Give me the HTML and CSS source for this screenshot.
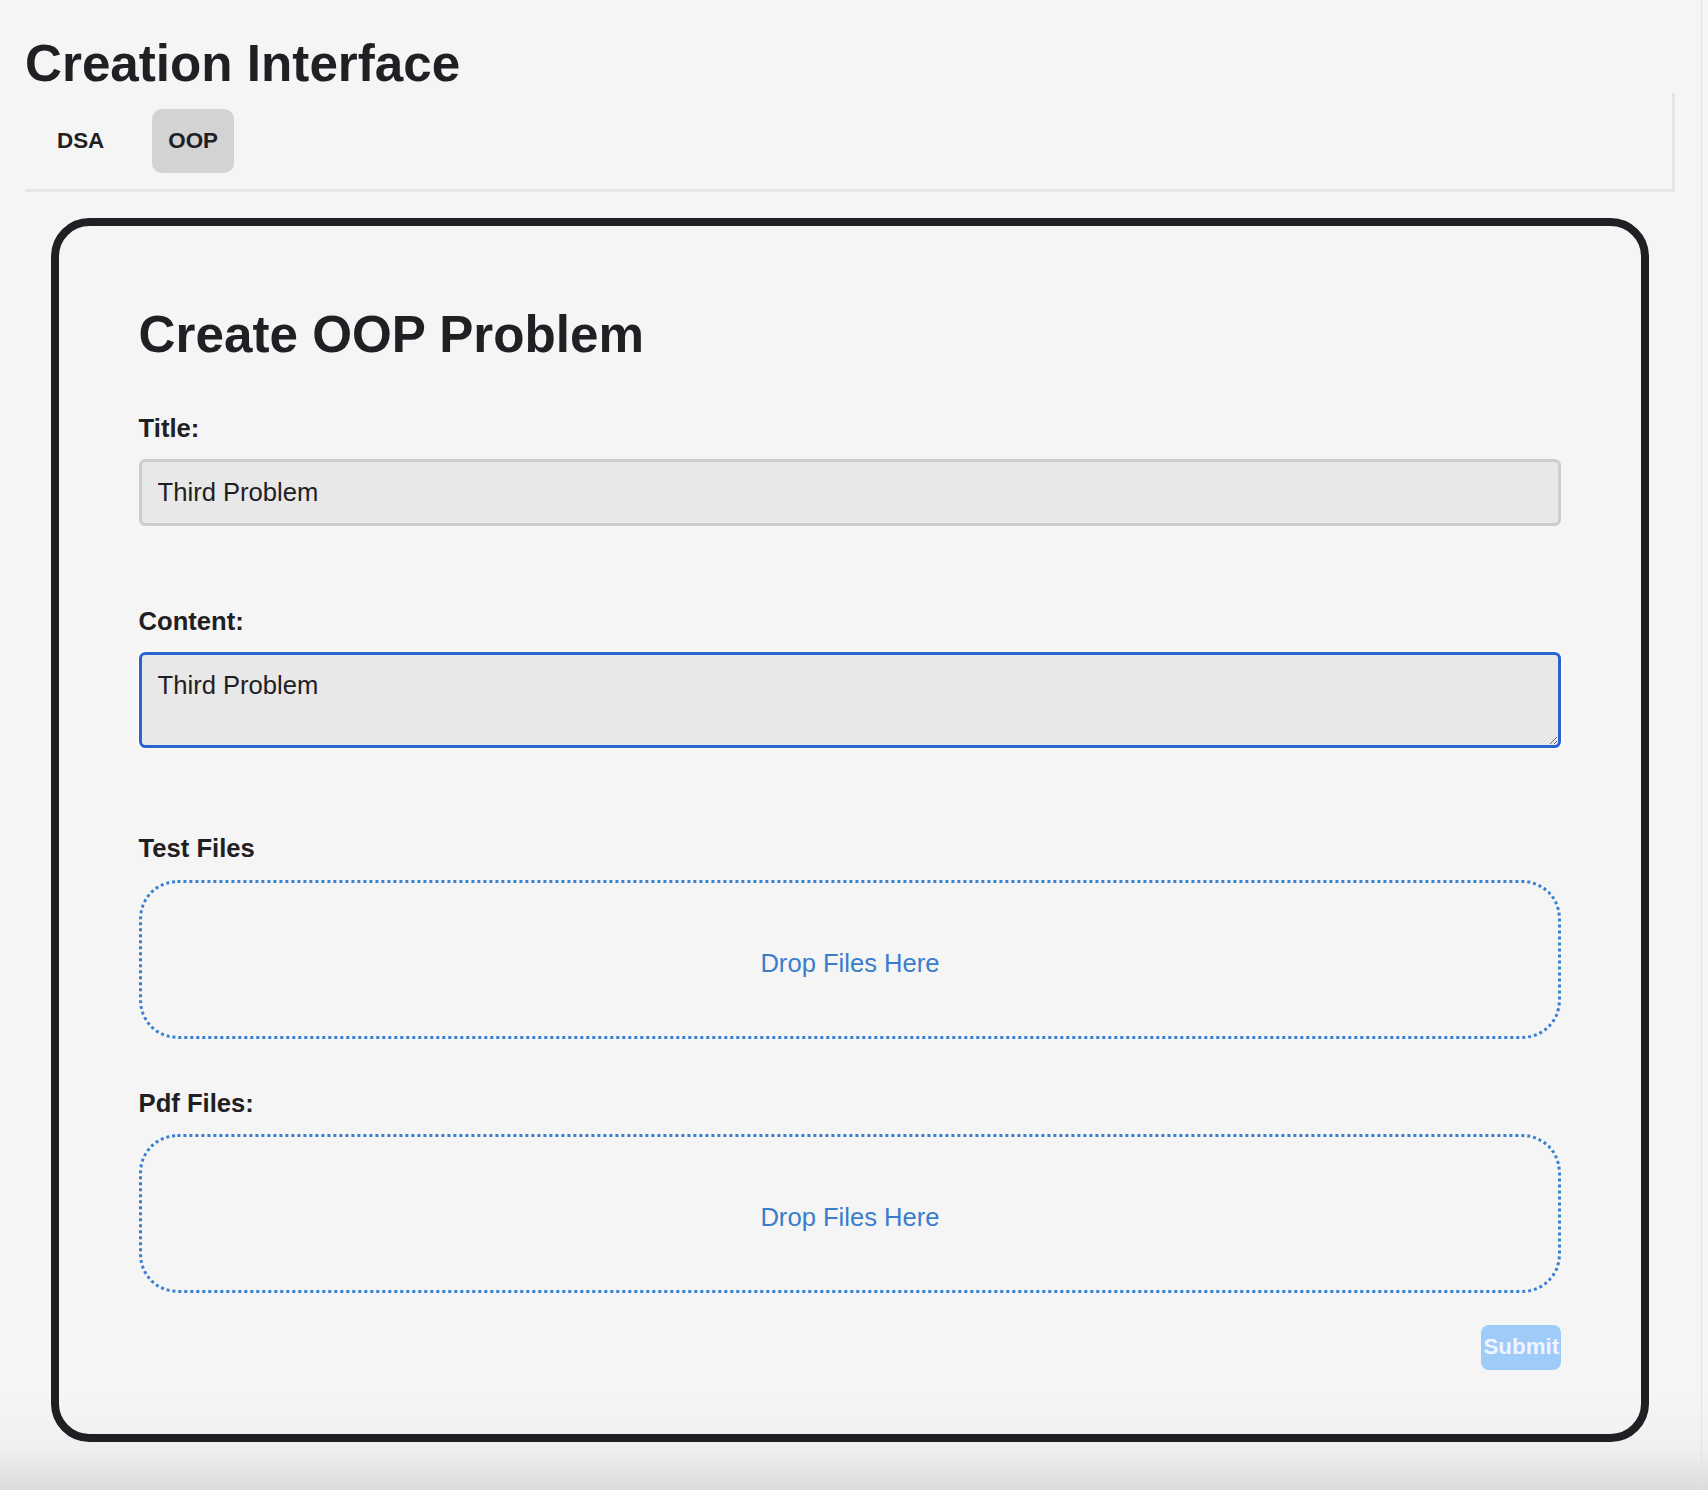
FILE: index.html
```html
<!DOCTYPE html>
<html lang="en">
<head>
<meta charset="utf-8">
<title>Creation Interface</title>
<link rel="stylesheet" href="styles.css">
</head>
<body>
<div class="page">
  <h1 class="page-title">Creation Interface</h1>
  <div class="tabbar">
    <button class="tab">DSA</button>
    <button class="tab tab-active">OOP</button>
  </div>
  <div class="card">
    <h2 class="card-title">Create OOP Problem</h2>
    <form class="form">
      <label class="label" for="title">Title:</label>
      <input class="input" id="title" type="text" value="Third Problem">
      <label class="label" for="content">Content:</label>
      <textarea class="textarea" id="content">Third Problem</textarea>
      <div class="label label-files">Test Files</div>
      <div class="dropzone">Drop Files Here</div>
      <div class="label label-files">Pdf Files:</div>
      <div class="dropzone dropzone-last">Drop Files Here</div>
      <div class="actions">
        <button class="submit" type="button">Submit</button>
      </div>
    </form>
  </div>
</div>
</body>
</html>
```

FILE: styles.css
```css
html {
  height: 100%;
  margin-right: 6px;
  border-right: 1px solid #e3e3e3;
  background: linear-gradient(to bottom, #f5f5f5 0, #f5f5f5 1395px, #f0f0f0 1448px, #dcdcdc 1490px);
}

body {
  margin: 0;
  font-family: "Liberation Sans", Arial, Helvetica, sans-serif;
  color: #1f2023;
}

.page {
  padding: 34px 26px 0 25px;
}

.page-title {
  margin: 0;
  font-size: 51.2px;
  font-weight: 700;
  line-height: normal;
}

.tabbar {
  display: flex;
  padding: 16px 0;
  border-right: 3.2px solid #e5e5e5;
  border-bottom: 3.2px solid #e5e5e5;
}

.tab {
  margin: 0 16px;
  padding: 19.2px 16px;
  border: 0;
  border-radius: 10px;
  background: transparent;
  font-family: inherit;
  font-size: 22.4px;
  font-weight: 700;
  line-height: normal;
  color: #1f2023;
}

.tab-active {
  background: #d3d3d3;
}

.card {
  margin: 25.6px;
  padding: 79.4px 80px 64.5px;
  border: 8px solid #1f2023;
  border-radius: 38.4px;
}

.card-title {
  margin: 0 0 50px;
  font-size: 51.2px;
  font-weight: 700;
  line-height: normal;
}

.form {
  display: flex;
  flex-direction: column;
}

.label {
  display: block;
  margin-bottom: 16px;
  font-size: 25.6px;
  font-weight: 700;
  line-height: normal;
}

.label-files {
  margin-bottom: 16.5px;
}

.input {
  box-sizing: border-box;
  height: 67px;
  margin: 0 0 81px;
  padding: 0 16px;
  border: 3.2px solid #cdcdcd;
  border-radius: 6.4px;
  background: #e8e8e8;
  font-family: inherit;
  font-size: 25.6px;
  color: #1f2023;
}

.textarea {
  display: block;
  box-sizing: border-box;
  height: 96px;
  margin: 0 0 86px;
  padding: 16px 16px;
  border: 3.2px solid #2b63cf;
  border-radius: 6.4px;
  box-shadow: 0 0 0 1.5px #ffffff;
  background: #e8e8e8;
  font-family: inherit;
  font-size: 25.6px;
  line-height: normal;
  color: #1f2023;
  outline: none;
}

.dropzone {
  box-sizing: border-box;
  height: 159px;
  margin-bottom: 50px;
  padding-top: 66px;
  border: 3.2px dotted #3a80d0;
  border-radius: 38.4px;
  text-align: center;
  font-size: 25.6px;
  line-height: normal;
  color: #3a7dca;
}

.dropzone-last {
  margin-bottom: 0;
}

.actions {
  display: flex;
  justify-content: flex-end;
  margin-top: 31.5px;
}

.submit {
  box-sizing: border-box;
  width: 80px;
  height: 45px;
  padding: 0 2px;
  border: 0;
  border-radius: 8px;
  background: #9fcbf9;
  font-family: inherit;
  font-size: 22.4px;
  font-weight: 700;
  line-height: normal;
  color: #eef5fe;
  white-space: nowrap;
  text-align: left;
  overflow: visible;
}
```
